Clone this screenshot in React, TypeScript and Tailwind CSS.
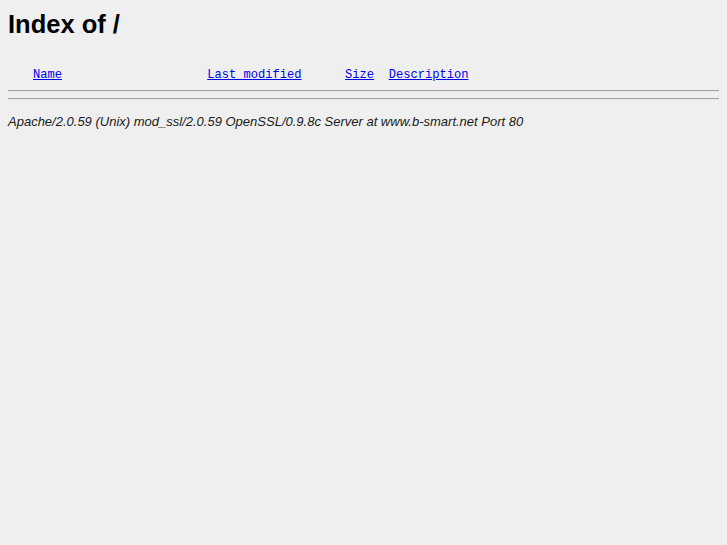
export default function App() {
  return (
    <div className="min-h-[545px] bg-[#efefef] px-2 pt-[9px] text-black">
      <h1 className="font-['Liberation_Sans',Arial,sans-serif] text-[25.5px] font-bold leading-[30px]">
        Index of /
      </h1>
      <pre className="mt-[29px] font-['Liberation_Mono','Courier_New',monospace] text-[12.1px] leading-[14px] text-[#0000ee]">
        <span className="inline-block w-[25px]" />
        <a href="#" className="underline">Name</a>
        {'                    '}
        <a href="#" className="underline">Last modified</a>
        {'      '}
        <a href="#" className="underline">Size</a>
        {'  '}
        <a href="#" className="underline">Description</a>
      </pre>
      <div className="mt-[8px] border-t border-b border-t-[#a0a0a0] border-b-[#e6e6e6]" />
      <div className="mt-[6px] border-t border-b border-t-[#a0a0a0] border-b-[#e6e6e6]" />
      <address className="mt-[14px] font-['Liberation_Sans',Arial,sans-serif] text-[13px] italic leading-[16px] text-[#1a1a1a]">
        Apache/2.0.59 (Unix) mod_ssl/2.0.59 OpenSSL/0.9.8c Server at www.b-smart.net Port 80
      </address>
    </div>
  );
}
